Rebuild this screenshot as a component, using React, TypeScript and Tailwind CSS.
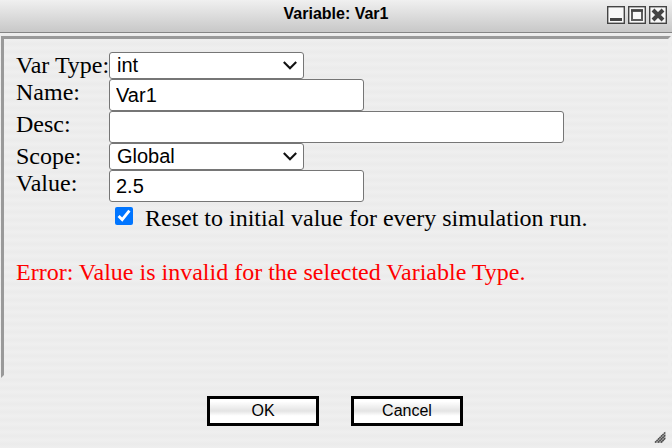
import { useState } from 'react';
import type { ReactNode } from 'react';

const sans = "font-['Liberation_Sans',Arial,sans-serif]";
const field = `${sans} block h-8 max-w-full rounded-[3px] border border-[#767676] bg-white px-1.5 text-xl text-black`;

function Row({ id, label, children }: { id: string; label: string; children: ReactNode }) {
  return (
    <div className="flex items-start">
      <label htmlFor={id} className="w-[93px] shrink-0 whitespace-nowrap">
        {label}
      </label>
      {children}
    </div>
  );
}

function Dropdown({ id, options }: { id: string; options: string[] }) {
  return (
    <div className="grid w-[195px] items-center">
      <select
        id={id}
        className={`${sans} col-start-1 row-start-1 h-[27px] w-full appearance-none rounded-[3px] border border-[#767676] bg-white px-[7px] pb-0.5 text-xl leading-6 text-black`}
      >
        {options.map((option) => (
          <option key={option}>{option}</option>
        ))}
      </select>
      <svg
        viewBox="0 0 14 9"
        className="pointer-events-none col-start-1 row-start-1 mr-[7px] h-[9px] w-3.5 justify-self-end"
        fill="none"
        stroke="#111"
        strokeWidth="2.1"
        aria-hidden="true"
      >
        <path d="M0.8 1 7 7.2 13.2 1" />
      </svg>
    </div>
  );
}

function WindowButton({ label, children }: { label: string; children: ReactNode }) {
  return (
    <button type="button" aria-label={label} className="size-[18px]">
      <svg viewBox="0 0 18 18" className="size-[18px]" aria-hidden="true">
        <rect x="0.7" y="0.7" width="16.6" height="16.6" fill="#f8f8f8" stroke="#444" strokeWidth="1.4" />
        {children}
      </svg>
    </button>
  );
}

function DialogButton({ children }: { children: ReactNode }) {
  return (
    <button
      type="button"
      className={`${sans} h-[30px] w-28 border-3 border-black bg-linear-to-b from-white from-10% via-[#e4e4e4] via-50% to-white to-70% text-base leading-6 text-black`}
    >
      {children}
    </button>
  );
}

export default function App() {
  const [name, setName] = useState('Var1');
  const [desc, setDesc] = useState('');
  const [value, setValue] = useState('2.5');
  const [reset, setReset] = useState(true);

  return (
    <div className="flex min-h-screen flex-col bg-[#ededed] bg-[repeating-linear-gradient(to_bottom,#efefef_0px,#ebebeb_4px,#efefef_8px)] font-['Liberation_Serif','Times_New_Roman',serif] text-2xl leading-[27px] text-black">
      <header className="grid h-[33px] grid-cols-[1fr_auto_1fr] items-center border-b border-[#858585] bg-linear-to-b from-[#f0f0f0] to-[#c8c8c8] pb-0.5">
        <h1 className={`${sans} col-start-2 pb-0.5 text-base leading-5 font-bold`}>Variable: Var1</h1>
        <div className="flex gap-[3px] justify-self-end pr-[5px]">
          <WindowButton label="Minimize">
            <path d="M3 13.5h12" stroke="#444" strokeWidth="3" />
          </WindowButton>
          <WindowButton label="Maximize">
            <rect x="4" y="4.5" width="10" height="9.5" fill="none" stroke="#5c5c5c" strokeWidth="2" />
            <path d="M3 4.5h12" stroke="#444" strokeWidth="2.6" />
          </WindowButton>
          <WindowButton label="Close">
            <path d="M4 4 14 14M14 4 4 14" stroke="#444" strokeWidth="4" />
          </WindowButton>
        </div>
      </header>

      <main className="mx-px mt-[3px] flex-1 border-3 border-t-[#999] border-r-[#eee] border-b-[#eee] border-l-[#999] px-3 pt-[13px]">
        <Row id="type" label="Var Type:">
          <Dropdown id="type" options={['int', 'double', 'bool']} />
        </Row>
        <Row id="name" label="Name:">
          <input id="name" className={`${field} w-[255px]`} value={name} onChange={(e) => setName(e.target.value)} />
        </Row>
        <Row id="desc" label="Desc:">
          <input id="desc" className={`${field} w-[455px]`} value={desc} onChange={(e) => setDesc(e.target.value)} />
        </Row>
        <Row id="scope" label="Scope:">
          <Dropdown id="scope" options={['Global', 'Local']} />
        </Row>
        <Row id="value" label="Value:">
          <input id="value" className={`${field} w-[255px]`} value={value} onChange={(e) => setValue(e.target.value)} />
        </Row>
        <label className="mt-[3px] ml-[99px] flex items-start gap-3">
          <input
            type="checkbox"
            className="mt-0.5 size-[18px] shrink-0 accent-[#0075ff]"
            checked={reset}
            onChange={(e) => setReset(e.target.checked)}
          />
          Reset to initial value for every simulation run.
        </label>
        <p role="alert" className="mt-[27px] text-[#f00]">
          Error: Value is invalid for the selected Variable Type.
        </p>
      </main>

      <footer className="grid h-[70px] grid-cols-[1fr_auto_1fr] items-start pt-[18px] pr-0.5">
        <div className="col-start-2 flex gap-8">
          <DialogButton>OK</DialogButton>
          <DialogButton>Cancel</DialogButton>
        </div>
        <svg viewBox="0 0 12 12" className="mr-1 mb-[5px] size-3 self-end justify-self-end" aria-hidden="true">
          <path d="M0.5 12 11.5 1V8L8 12Z" fill="#aaa" />
          <path d="M1 11.5 11.5 1M4 11.5 11.5 4M7 11.5 11.5 7" stroke="#4a4a4a" strokeWidth="1.4" strokeDasharray="1.7 0.4" />
        </svg>
      </footer>
    </div>
  );
}
